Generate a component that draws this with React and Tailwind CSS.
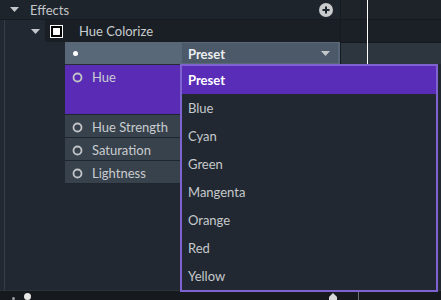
import React from "react";

const Tri = ({ className = "" }) => (
  <svg width="9" height="5" viewBox="0 0 9 5" className={className}>
    <path d="M0 0 L9 0 L4.5 5 Z" fill="#c3c7cc" />
  </svg>
);

const Ring = () => (
  <svg width="11" height="11" viewBox="0 0 11 11" className="shrink-0">
    <circle cx="5.5" cy="5.5" r="4" fill="none" stroke="#c2c4c8" strokeWidth="1.8" />
  </svg>
);

const ParamRow = ({ label, h = "h-[23px]", purple = false }) => (
  <div
    className={`${h} flex items-start pl-[7px] border-b border-[#20262d] ${
      purple ? "bg-[#5a2cb6]" : "bg-[#38424c]"
    }`}
  >
    <div className="h-[22px] pt-[2px] flex items-center gap-[9px]">
      <Ring />
      <span className="text-[#c9ccd0]">{label}</span>
    </div>
  </div>
);

const items = ["Preset", "Blue", "Cyan", "Green", "Mangenta", "Orange", "Red", "Yellow"];

export default function App() {
  return (
    <div className="relative w-[441px] h-[300px] overflow-hidden bg-[#222831] text-[13px] leading-none font-['Lato','Noto_Sans',sans-serif]">
      <div className="flex h-[290px]">
        {/* left panel */}
        <div className="w-[340px] flex flex-col">
          {/* Effects row */}
          <div className="h-[20px] shrink-0 flex items-center bg-[#1e242b] border-b border-[#171b20]">
            <Tri className="ml-[10px]" />
            <span className="ml-[11px] pt-[1px] text-[#c3c6ca]">Effects</span>
            <div className="ml-auto mr-[7px] w-[14px] h-[14px] rounded-full bg-[#c9cbcd] flex items-center justify-center">
              <svg width="8" height="8" viewBox="0 0 8 8">
                <path d="M4 0.5 V7.5 M0.5 4 H7.5" stroke="#1e242b" strokeWidth="2" />
              </svg>
            </div>
          </div>
          <div className="flex-1 flex">
            <div className="w-[4px]" />
            <div className="flex-1 border-l border-[#353c45] flex flex-col">
              {/* Hue Colorize row */}
              <div className="h-[22px] shrink-0 flex items-center">
                <div className="w-[40px] h-full flex items-center">
                  <Tri className="ml-[26px]" />
                </div>
                <div className="flex-1 h-full bg-[#1a1f25] flex items-center">
                  <div className="ml-[5px] w-[13px] h-[13px] border-[1.5px] border-white flex items-center justify-center bg-black">
                    <div className="w-[7px] h-[7px] bg-white" />
                  </div>
                  <span className="ml-[16px] pt-[1px] text-[#c9ccd0]">Hue Colorize</span>
                </div>
              </div>
              {/* params */}
              <div className="ml-[60px] flex flex-col">
                <div className="h-[23px] flex items-center bg-[#586878] border-b border-[#262d35]">
                  <div className="ml-[8px] w-[5px] h-[5px] rounded-full bg-white" />
                  <div className="ml-[104px] w-[156px] h-[20px] bg-[#4b5968] flex items-center px-[6px] rounded-[1px]">
                    <span className="pt-[2px] text-[#eceef0] font-bold">Preset</span>
                    <Tri className="ml-auto mr-[2px]" />
                  </div>
                </div>
                <ParamRow label="Hue" h="h-[50px]" purple />
                <ParamRow label="Hue Strength" />
                <ParamRow label="Saturation" />
                <ParamRow label="Lightness" />
              </div>
            </div>
          </div>
        </div>
        {/* right panel */}
        <div className="flex-1 flex flex-col border-l border-[#171b20]">
          <div className="h-[20px] bg-[#1e232a] border-b border-[#15191d]" />
          <div className="h-[23px] bg-[#1b2027] border-b border-[#15191d]" />
          <div className="h-[21px] bg-[#2d353e]" />
          <div className="flex-1 bg-[#222831]" />
        </div>
      </div>
      {/* playhead line */}
      <div className="absolute left-[367px] top-0 w-[1px] h-[64px] bg-white" />
      {/* bottom bar */}
      <div className="h-[10px] bg-[#161a1f] border-t border-[#2b3239] relative">
        <div className="absolute left-[12px] top-[6px] w-[3px] h-[3px] rounded-full bg-[#9aa0a6]" />
        <div className="absolute left-[24px] top-[2px] w-[7px] h-[7px] rounded-full bg-[#e8e8e8]" />
        <div className="absolute left-[329px] top-[2px] w-[8px] h-[8px] bg-[#d8d8d8] [clip-path:polygon(50%_0,100%_50%,100%_100%,0_100%,0_50%)]" />
        <div className="absolute left-[358px] top-0 w-[1px] h-[10px] bg-[#6b7178]" />
      </div>
      {/* dropdown */}
      <div className="absolute left-[180px] top-[64px] w-[258px] h-[228px] border-2 border-[#7e62cf] bg-[#222831] flex flex-col">
        {items.map((it, i) => (
          <div
            key={it}
            className={`h-[28px] shrink-0 flex items-center pl-[6px] ${
              i === 0 ? "bg-[#5a2db8] text-white font-bold" : "text-[#c5c8cc]"
            }`}
          >
            {it}
          </div>
        ))}
      </div>
    </div>
  );
}
